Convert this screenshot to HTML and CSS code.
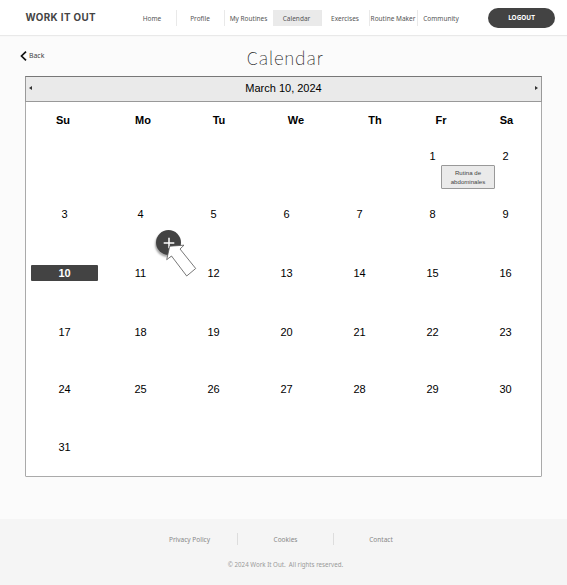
FILE: index.html
```html
<!DOCTYPE html>
<html lang="en">
<head>
<meta charset="utf-8">
<title>Work It Out - Calendar</title>
<link rel="stylesheet" href="styles.css">
</head>
<body>
<header class="topbar">
  <div class="brand">WORK IT OUT</div>
  <nav class="nav">
    <a>Home</a><a>Profile</a><a>My Routines</a><a class="active">Calendar</a><a>Exercises</a><a>Routine Maker</a><a>Community</a>
  </nav>
  <button class="logout">LOGOUT</button>
</header>
<main class="main">
  <div class="heading">
    <a class="back"><svg width="7" height="10" viewBox="0 0 7 10"><path d="M6 .7 1.5 5 6 9.3"/></svg><span>Back</span></a>
    <h1>Calendar</h1>
  </div>
  <section class="calendar">
    <div class="month">
      <svg width="3" height="4" viewBox="0 0 3 4"><path d="M3 0v4L0 2z"/></svg>
      <span>March 10, 2024</span>
      <svg width="3" height="4" viewBox="0 0 3 4"><path d="M0 0v4l3-2z"/></svg>
    </div>
    <div class="weekdays"><span>Su</span><span>Mo</span><span>Tu</span><span>We</span><span>Th</span><span>Fr</span><span>Sa</span></div>
    <div class="days">
      <div></div><div></div><div></div><div></div><div></div>
      <div class="day"><span>1</span><div class="event">Rutina de abdominales</div></div><div class="day"><span>2</span></div>
      <div class="day"><span>3</span></div>
      <div class="day"><span>4</span>
        <button class="add" aria-label="Add"><svg width="12" height="12" viewBox="0 0 12 12"><path d="M6 .7v10.6M.7 6h10.6"/></svg></button>
        <svg class="pointer" width="32" height="34" viewBox="0 0 32 34"><path d="M4.7 2.2 19 1.2 15 5 30.7 24.5 21.7 32 6.5 12 1.7 15.7z"/></svg>
      </div>
      <div class="day"><span>5</span></div><div class="day"><span>6</span></div><div class="day"><span>7</span></div><div class="day"><span>8</span></div><div class="day"><span>9</span></div>
      <div class="day today"><span>10</span></div><div class="day"><span>11</span></div><div class="day"><span>12</span></div><div class="day"><span>13</span></div><div class="day"><span>14</span></div><div class="day"><span>15</span></div><div class="day"><span>16</span></div>
      <div class="day"><span>17</span></div><div class="day"><span>18</span></div><div class="day"><span>19</span></div><div class="day"><span>20</span></div><div class="day"><span>21</span></div><div class="day"><span>22</span></div><div class="day"><span>23</span></div>
      <div class="day"><span>24</span></div><div class="day"><span>25</span></div><div class="day"><span>26</span></div><div class="day"><span>27</span></div><div class="day"><span>28</span></div><div class="day"><span>29</span></div><div class="day"><span>30</span></div>
      <div class="day"><span>31</span></div>
    </div>
  </section>
</main>
<footer class="footer">
  <div class="links"><a>Privacy Policy</a><a>Cookies</a><a>Contact</a></div>
  <p>© 2024 Work It Out.&nbsp; All rights reserved.</p>
</footer>
</body>
</html>
```
FILE: styles.css
```css
* { box-sizing: border-box; }
body { margin: 0; width: 567px; height: 585px; overflow: hidden; display: flex; flex-direction: column; background: #fbfbfb; font-family: "Noto Sans", sans-serif; color: #444; }
button { border: 0; padding: 0; font: inherit; }
.topbar { flex: none; height: 35px; display: flex; align-items: center; background: #fff; box-shadow: 0 1px 1px #e9e9e9; }
.brand { width: 103px; margin-left: 25.5px; font: 700 9.8px/12px Inter, sans-serif; letter-spacing: .4px; white-space: nowrap; }
.nav { display: flex; height: 16px; margin-top: 1px; }
.nav a { width: 48px; height: 16px; border-right: 1px solid #e9e9e9; font-size: 6.5px; line-height: 17px; text-align: center; white-space: nowrap; color: #555; }
.nav a:nth-child(3) { border-right: 0; }
.nav a:last-child { width: 47px; border-right: 0; }
.nav .active { width: 49px; background: #eaeaea; }
.logout { width: 67px; height: 20px; margin-left: 23px; padding-left: 1px; border-radius: 10px; background: #434343; color: #fff; font: 700 6.4px/20px "Noto Sans", sans-serif; }
.main { flex: none; height: 484px; padding: 0 25px; }
.heading { position: relative; height: 41px; }
.back { position: absolute; left: -5px; top: 16px; display: flex; align-items: center; gap: 2px; font-size: 6.9px; line-height: 10px; }
.back svg { fill: none; stroke: #111; stroke-width: 1.7; }
h1 { margin: 0; padding: 9px 0 0 3px; font: 100 18px/26px "Noto Sans CJK SC", sans-serif; letter-spacing: .6px; text-align: center; color: #222; }
.calendar { width: 517px; height: 401px; background: #fff; border: 1px solid #aaa; border-radius: 1px; font-family: "Liberation Sans", sans-serif; font-size: 11px; color: #000; }
.month { display: flex; justify-content: space-between; align-items: center; height: 26px; margin: -1px -1px 0; padding: 0 3px 2px 3px; border: 1px solid #999; border-top-color: #777; background: #eaeaea; }
.month svg { fill: #333; }
.weekdays { display: grid; grid-template-columns: 74px 86px 66px 88px 70px 62px 69px; height: 37px; line-height: 37px; font-weight: 700; text-align: center; }
.days { display: grid; grid-template-columns: 78px repeat(6, 73px); grid-template-rows: 58px 59px 59px 57px 58px 30px; padding-top: 9px; }
.day { position: relative; height: 16px; line-height: 16px; text-align: center; }
.day:nth-child(7n+1) { padding-right: 1px; }
.today span { display: block; width: 67px; margin: 0 auto; border-radius: 1px; background: #434343; color: #fff; font-weight: 700; }
.event { position: absolute; left: 45px; top: 17px; width: 54px; height: 24px; padding-top: 2px; border: 1px solid #999; border-radius: 1px; background: #eaeaea; color: #444; font-size: 6.1px; line-height: 9px; }
.add { position: absolute; left: 52px; top: 24px; display: grid; place-items: center; width: 25px; height: 25px; border-radius: 50%; background: #434343; box-shadow: -1px 2px 2px #aaa; }
.add svg { stroke: #fff; stroke-width: 1.5; }
.pointer { position: absolute; left: 61px; top: 38px; fill: #fff; stroke: #555; stroke-width: .8; }
.footer { flex: 1; background: #f5f5f5; font-size: 6.5px; color: #999; }
.links { display: flex; width: 288px; margin: 14px auto 0 142px; height: 12px; line-height: 13px; color: #888; }
.links a { width: 96px; text-align: center; border-right: 1px solid #ddd; }
.links a:last-child { width: 94px; border: 0; }
.footer p { margin: 15px 0 0 4px; font-size: 6.2px; line-height: 10px; text-align: center; }
```
